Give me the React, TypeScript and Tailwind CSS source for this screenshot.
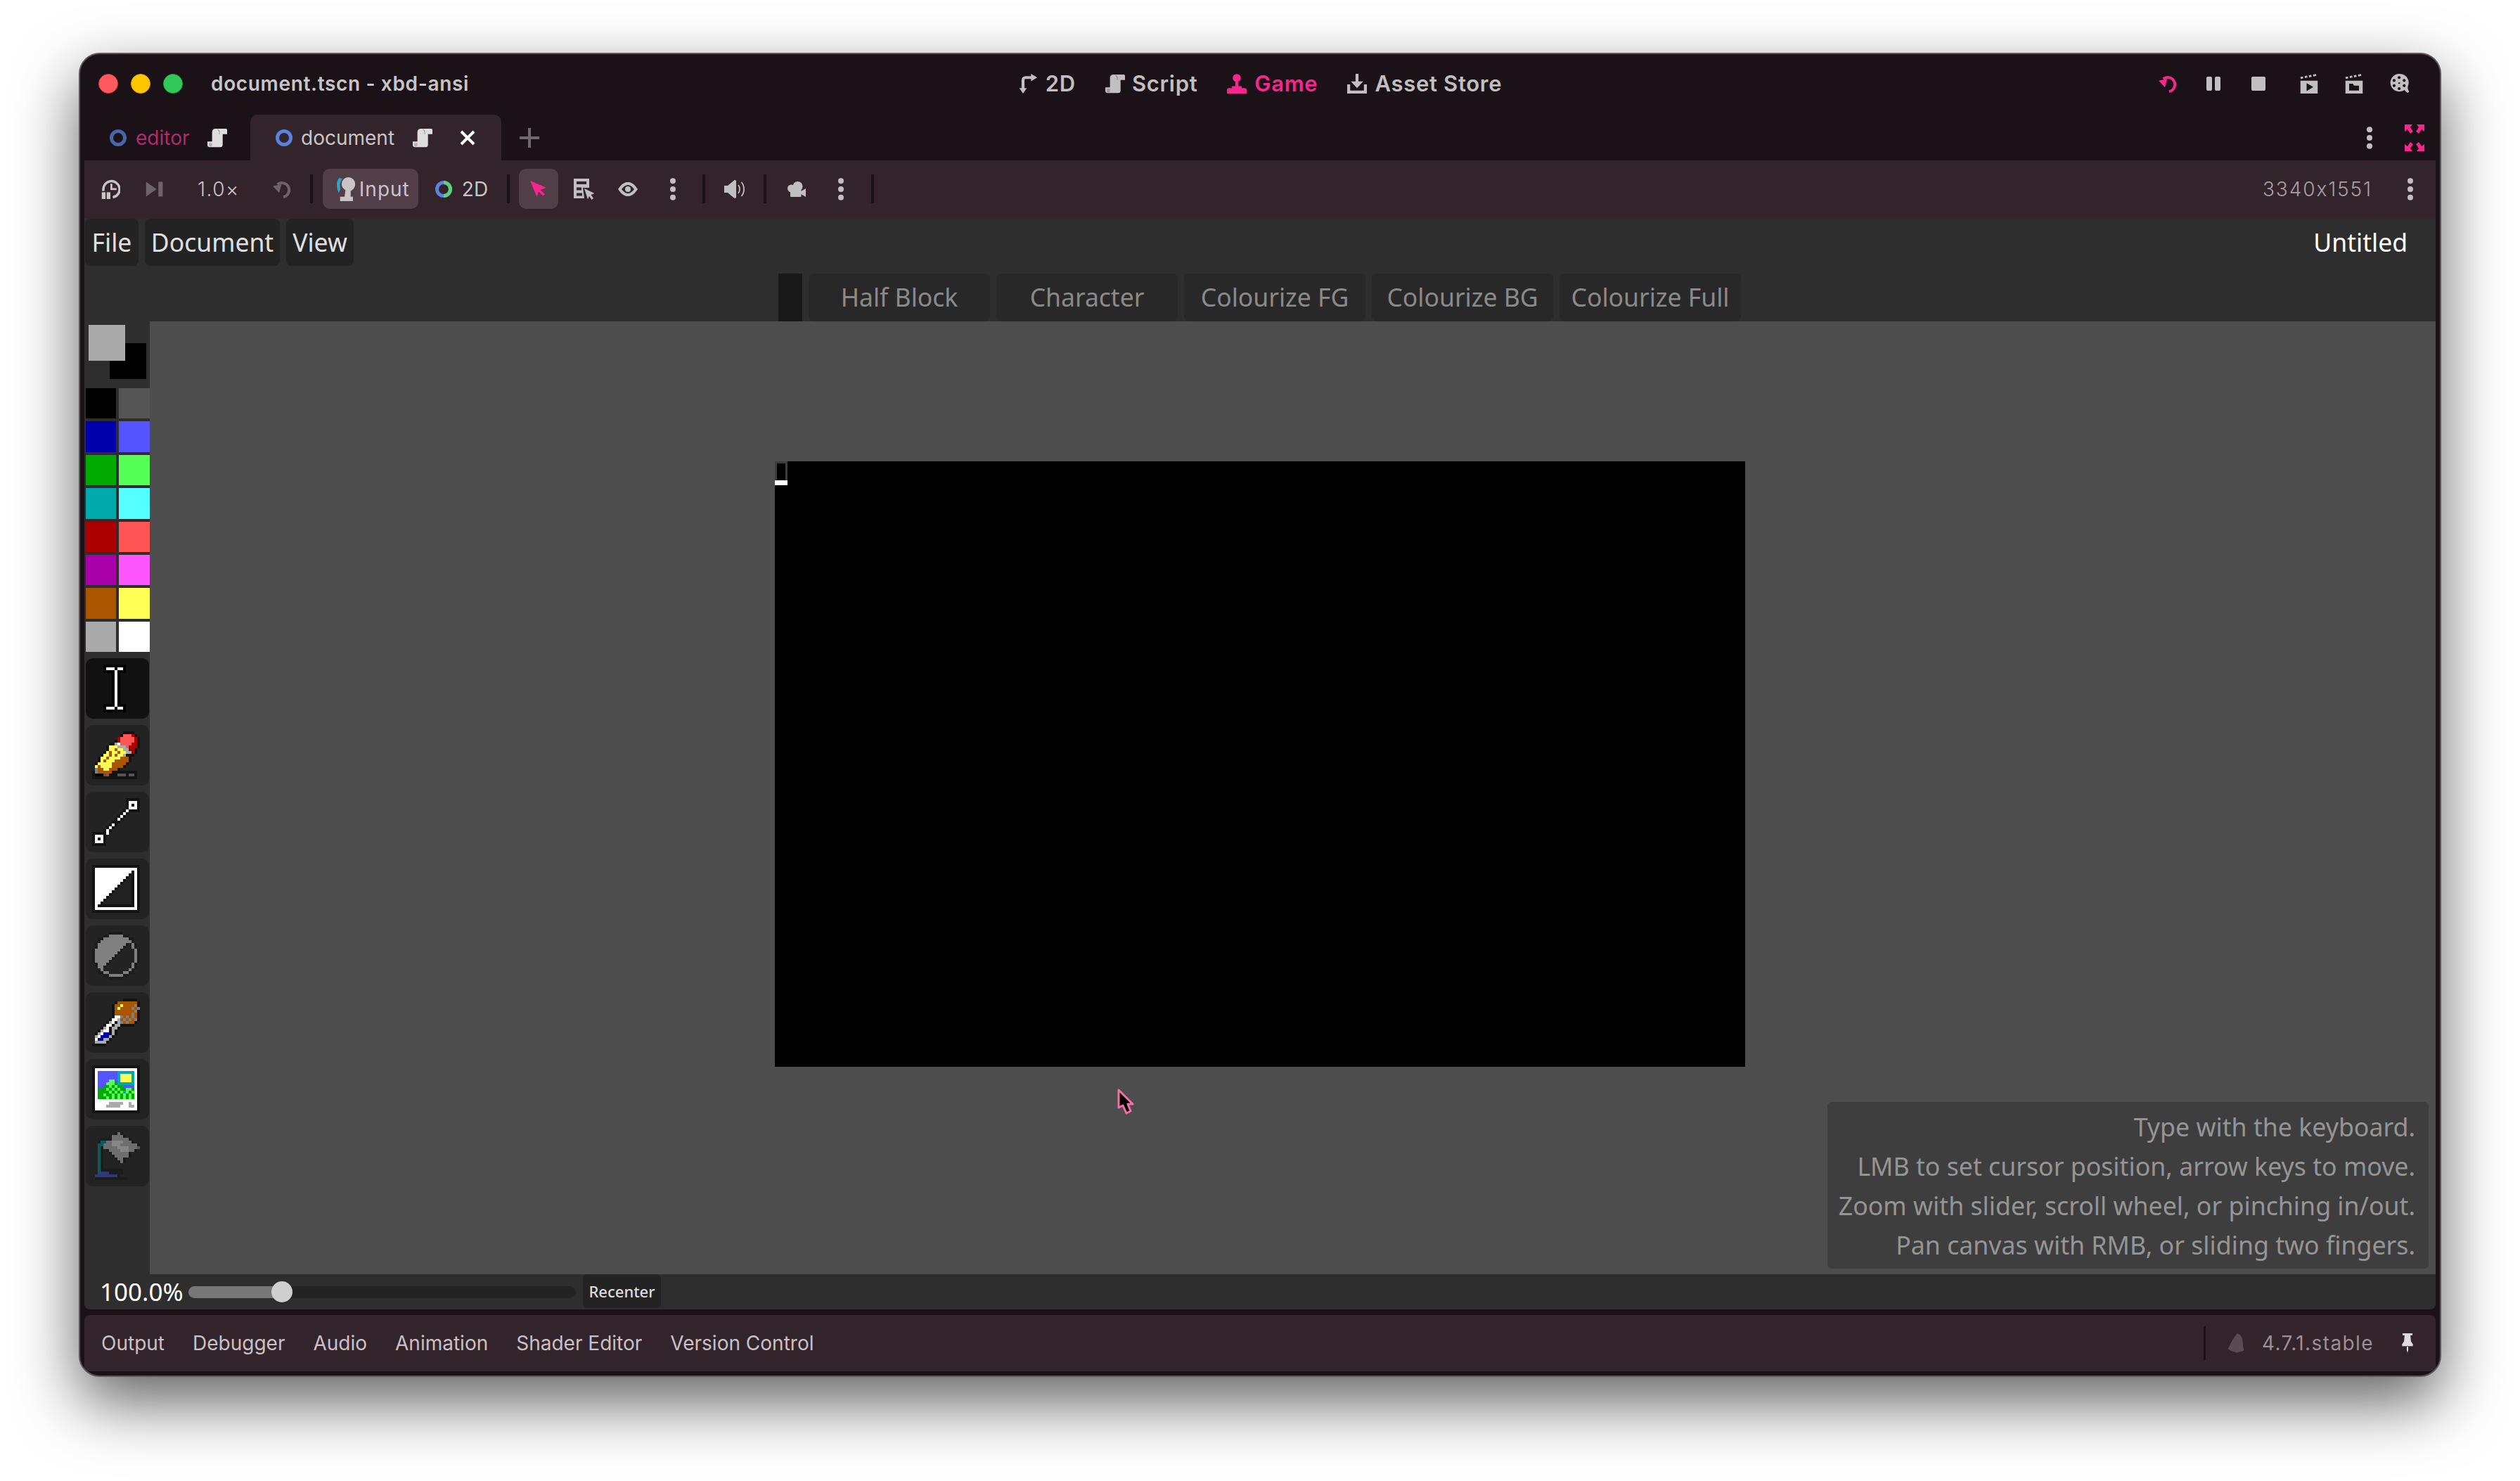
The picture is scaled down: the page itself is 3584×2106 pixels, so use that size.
import type { ReactNode } from "react";

const PIXEL_COLORS: Record<string, string> = {
  K: "#000000",
  k: "#131313",
  W: "#ffffff",
  L: "#ff5555",
  D: "#aa0000",
  Y: "#ffff55",
  O: "#aa5500",
  B: "#aa5500",
  G: "#aaaaaa",
  S: "#5555ff",
  C: "#00aaaa",
  E: "#00aa00",
  F: "#55ff55",
  A: "#aaaaaa",
  U: "#0000aa",
  g: "#808080",
  f: "#1c1c1c",
  p: "#6e6e6e",
  h: "#868686",
  d: "#232323",
  T: "#0d5a5a",
  V: "#35357a",
  M: "#555555",
};

const CURSOR_TOOL = [
  "....KKKKKKKK.....",
  "....KWWWKWWK.....",
  "....KKKKWKKK.....",
  ".......KWK.......",
  ".......KWK.......",
  ".......KWK.......",
  ".......KWK.......",
  ".......KWK.......",
  ".......KWK.......",
  ".......KWK.......",
  ".......KWK.......",
  ".......KWK.......",
  ".......KWK.......",
  ".......KWK.......",
  "....KKKKWKKK.....",
  "....KWWWKWWK.....",
  "....KKKKKKKK.....",
];

const PENCIL_TOOL = [
  "...........kkkk..",
  "..........kLLLDk.",
  ".........DLLLLLDk",
  "........kDLLLLLDk",
  "......kkGWLLLLDDk",
  ".....kYYYGGGLDDDk",
  ".....kYYBYYGGDDk.",
  "....kYBYYBYYGGDk.",
  "...kYYBYBYYGkkk..",
  "..kYYBYYYYOOOk...",
  "..kYBYYYOOOOOk...",
  ".kYYYYYOOOOOk....",
  ".YOYYYYOOOOk.....",
  ".gOOYYOOOk.......",
  "kgOOOOOkkkkkkkkk.",
  "kKKKMOkkkMMMkMMk.",
  "kkkkkkkkkkkkkkkk.",
];

const LINE_TOOL = [
  "............kkkkk",
  "............kWWWk",
  "............kWkWk",
  "............kWWWk",
  "...........kWkkkk",
  "..........kWk....",
  ".........kWk.....",
  "........kWk......",
  ".......kkk.......",
  "......kWk........",
  ".....kWk.........",
  "....kWk..........",
  "kkkkkW...........",
  "kWWWk............",
  "kWkWk............",
  "kWWWk............",
  "kkkkk............",
];

const DROPPER_TOOL = [
  "...........kkkkk.",
  "........kOOOOOOOk",
  ".......kOOYOOOOgk",
  ".......kOYOOOOgOg",
  ".......kOOOOOOOgk",
  ".......kOOOOOOgOk",
  ".......kWWgOgOgOk",
  "......kWWGOgOgOgk",
  ".....kGWkGgOgOOk.",
  "....kWWkGGkkkkk..",
  "...kGWkGGk.......",
  "..kGWWkGk........",
  ".kGWUUkGk........",
  ".GWUUUGk.........",
  ".WUUGGk..........",
  ".GGGGk...........",
  "kkkkk............",
];

const IMAGE_TOOL = [
  "kkkkkkkkkkkkkkkkk",
  "kWWWWWWWWWWWWWWWk",
  "kWSSSSSSSCCCCCCWk",
  "kWSSSSSSSCYYYYCWk",
  "kWSSSSSSSCYYYYCWk",
  "kWSSSSFFSCYYYYCWk",
  "kWSSSFFFECCCCCCWk",
  "kWSSEEFEFEESSSSWk",
  "kWEEEFEFEFEEFFEWk",
  "kWEEEEFEFEFCFEFWk",
  "kWEEFEEFEFEFEFEWk",
  "kWEEEFEFEFEFEFEWk",
  "kWWWWWWWWWWWWWWWk",
  "kWWWWWAAAAAWWAWWk",
  "kWWWWAAAAAWWWAAWk",
  "kWWWWWWWWWWWWWWWk",
  "kkkkkkkkkkkkkkkkk",
];

const BUCKET_TOOL = [
  "........fpf......",
  "......fppppf.....",
  "...ffffppppppf...",
  "..fTTpphhhhpppf..",
  "..TTppphhhppppppf",
  "..TfppppphhhhpppM",
  "..Tf.fpppphhhppf.",
  "..Tf..fppppppf...",
  "..Tf...fpppppf...",
  "..Tf....fppf.....",
  "..Tf.....fpf.....",
  "..Tf.............",
  "..Tf.............",
  "..Tffffffff......",
  "..TVVVfffff......",
  ".VVVVVVVVf.......",
  ".ffffffffffff....",
];

// rectangle tool is just a diagonal split, easier to compute than to type
function rectangleRows() {
  const rows: string[] = [];
  for (let y = 0; y < 17; y++) {
    let row = "";
    for (let x = 0; x < 17; x++) {
      if (x === 0 || y === 0 || x === 16 || y === 16) row += "k";
      else if (x === 15 || y === 15) row += "W";
      else if (x + y < 16) row += "W";
      else if (x + y === 16 || x === 14 || y === 14) row += "k";
      else row += "d";
    }
    rows.push(row);
  }
  return rows;
}

function ellipseRows() {
  const rows: string[] = [];
  for (let y = 0; y < 17; y++) {
    let row = "";
    for (let x = 0; x < 17; x++) {
      const dist = Math.hypot(x - 8, y - 8);
      if (dist > 8.5) row += ".";
      else if (dist > 7.6) row += "f";
      else if (dist > 6.6) row += "g";
      else if (x + y < 16) row += "g";
      else if (x + y === 16) row += "f";
      else row += "d";
    }
    rows.push(row);
  }
  return rows;
}

function PixelIcon({ rows }: { rows: string[] }) {
  return (
    <svg width={68} height={68} viewBox="0 0 17 17" shapeRendering="crispEdges">
      {rows.map((row, y) =>
        row.split("").map((cell, x) =>
          cell === "." ? null : (
            <rect key={`${x}-${y}`} x={x} y={y} width={1} height={1} fill={PIXEL_COLORS[cell]} />
          ),
        ),
      )}
    </svg>
  );
}

function Icon({ size = 28, className, children }: { size?: number; className?: string; children: ReactNode }) {
  return (
    <svg width={size} height={size} viewBox="0 0 16 16" fill="currentColor" className={`shrink-0 ${className ?? ""}`}>
      {children}
    </svg>
  );
}

function ScriptIcon({ className }: { className?: string }) {
  return (
    <Icon className={className}>
      <path d="M6.5 0.5H15a1 1 0 0 1 1 1V5h-3.6v8.5a2 2 0 0 1-2 2H1.8A1.8 1.8 0 0 1 0 13.7V11h3.8V3.2A2.7 2.7 0 0 1 6.5 0.5Z" />
      <path d="M1.2 12.2h2.6v1.6a1.3 1.3 0 0 1-2.6 0Z" fill="#000" fillOpacity="0.2" />
      <path d="M8.2 1.2c1.2.4 1.6 1.2 1.6 2.6v1.4" fill="none" stroke="#000" strokeOpacity="0.25" strokeWidth="0.7" />
    </Icon>
  );
}

function KebabIcon({ className }: { className?: string }) {
  return (
    <Icon className={className} size={32}>
      <circle cx="8" cy="2.1" r="2" />
      <circle cx="8" cy="8" r="2" />
      <circle cx="8" cy="13.9" r="2" />
    </Icon>
  );
}

function TwoDIcon() {
  return (
    <Icon>
      <path d="M4 14V5a2 2 0 0 1 2-2h5" fill="none" stroke="currentColor" strokeWidth="2.4" />
      <path d="M10.5 0 15.5 3 10.5 6Z" />
      <path d="M1 11.5h6L4 16Z" />
    </Icon>
  );
}

function JoystickIcon() {
  return (
    <Icon>
      <circle cx="8" cy="3.4" r="3.3" />
      <rect x="6.8" y="5" width="2.4" height="6" />
      <path d="M4 10h8v1.5h2.5a1.5 1.5 0 0 1 1.5 1.5v3H0v-3a1.5 1.5 0 0 1 1.5-1.5H4Z" />
    </Icon>
  );
}

function AssetIcon() {
  return (
    <Icon>
      <rect x="6.8" y="0" width="2.4" height="7" />
      <path d="M3 6.2h10L8 11.6Z" />
      <path d="M0 8.5h2.4v5h11.2v-5H16V16H0Z" />
    </Icon>
  );
}

function ReloadIcon({ className, size = 28 }: { className?: string; size?: number }) {
  return (
    <Icon className={className} size={size}>
      <path d="M3.8 4.2A5.8 5.8 0 1 1 8.5 14.4" fill="none" stroke="currentColor" strokeWidth="2.2" />
      <path d="M0 5.5 7 4 5.2 11Z" />
    </Icon>
  );
}

function ClapperIcon({ folder }: { folder?: boolean }) {
  return (
    <Icon>
      <path d="M1 2.5 3 2.1l.3 1.6-2 .4ZM4.4 1.8l2-.4.3 1.6-2 .4ZM7.8 1.2l2-.4.3 1.6-2 .4ZM11.2.6l2.3-.5.4 1.6-2.4.5Z" />
      <path d="M1 5.5h14V16H1Z" />
      {folder ? (
        <path d="M4 8h3l1 1.5h4v4H4Z" fill="#1a1217" />
      ) : (
        <path d="M6 7.5 11.5 10.7 6 14Z" fill="#1a1217" />
      )}
    </Icon>
  );
}

function FilmIcon() {
  return (
    <Icon>
      <path d="M8 0a7.2 7.2 0 0 1 6.6 10.2c-.3.9-.1 1.9.9 4.2l-.9 1.2c-1.5-1-2.6-2.3-2.9-2.5A7.2 7.2 0 1 1 8 0Z" />
      <g fill="#1a1217">
        <circle cx="7.5" cy="3" r="1.2" />
        <circle cx="3.4" cy="5.4" r="1.2" />
        <circle cx="11.6" cy="5.4" r="1.2" />
        <circle cx="3.4" cy="9.6" r="1.2" />
        <circle cx="11.6" cy="9.6" r="1.2" />
        <circle cx="7.5" cy="12" r="1.2" />
        <circle cx="7.5" cy="7.5" r="0.7" />
      </g>
    </Icon>
  );
}

function FullscreenIcon() {
  return (
    <svg width={28} height={38} viewBox="0 0 28 38" fill="currentColor" className="shrink-0">
      <path d="M0 0h11L8 4l4 6-4 3-4-6-4 3Z" />
      <path d="M28 0H17l3 4-4 6 4 3 4-6 4 3Z" />
      <path d="M0 38H11L8 34l4-6-4-3-4 6-4-3Z" />
      <path d="M28 38H17l3-4-4-6 4-3 4 6 4-3Z" />
    </svg>
  );
}

function TimeScaleIcon() {
  return (
    <Icon>
      <path d="M2.4 9.5A6.6 6.6 0 1 1 10 14.6" fill="none" stroke="currentColor" strokeWidth="2" />
      <path d="M8 3.5h1.6v3.6H13v1.6H8Z" />
      <rect x="1" y="10.5" width="3" height="5.5" />
      <rect x="5" y="10.5" width="3" height="5.5" />
    </Icon>
  );
}

function InputIcon() {
  return (
    <Icon size={34}>
      <path d="M5 .5C3 2.5 2.6 6 4.6 10.5L5.8 8C5 5.5 5.5 3 7 1Z" fill="#2aa5c4" />
      <path d="M11 0a4.6 4.6 0 0 1 4.6 4.6c0 2.5-1.800 4-3 4.700V13h1.500v3H5.500v-3h3l.6-4.300C7.500 7.600 6.500 6.300 6.500 4.600A4.600 4.600 0 0 1 11 0Z" />
    </Icon>
  );
}

function RingIcon({ stroke, second }: { stroke: string; second?: string }) {
  return (
    <svg width={24} height={24} viewBox="0 0 24 24" className="shrink-0" fill="none">
      <circle cx="12" cy="12" r="9.5" stroke={stroke} strokeWidth="5" />
      {second ? <path d="M12 2.5a9.5 9.5 0 0 1 0 19" stroke={second} strokeWidth="5" /> : null}
    </svg>
  );
}

function SelectArrowIcon() {
  return (
    <svg width={24} height={24} viewBox="0 0 24 24" fill="currentColor" className="shrink-0">
      <path d="M0 0 23 10 14.5 13 21 19 18.5 21.5 12 15.5 9.5 23Z" />
    </svg>
  );
}

function ListSelectIcon() {
  return (
    <svg width={30} height={30} viewBox="0 0 30 30" fill="currentColor" className="shrink-0">
      <path
        fillRule="evenodd"
        d="M0 0H22V13H13L15 28H0ZM4 4V8H18V4ZM4 12.5V16.5H11V12.5ZM4 20.5V24.5H12V20.5Z"
      />
      <path d="M15 14 29.5 21 24.5 23 28 28 25.5 30 22 25 20 29.5Z" stroke="#33232b" strokeWidth="1.5" paintOrder="stroke" />
    </svg>
  );
}

function EyeIcon() {
  return (
    <svg width={28} height={20} viewBox="0 0 28 20" fill="currentColor" className="shrink-0">
      <path
        fillRule="evenodd"
        d="M0 10C5 2.5 9 0 14 0s9 2.5 14 10C23 17.5 19 20 14 20S5 17.5 0 10ZM5 10c3 4 6 6 9 6s6-2 9-6c-3-4-6-6-9-6s-6 2-9 6Z"
      />
      <circle cx="14" cy="10" r="4" />
    </svg>
  );
}

function SpeakerIcon() {
  return (
    <svg width={29} height={28} viewBox="0 0 29 28" fill="currentColor" className="shrink-0">
      <path d="M0 9h5L14 1.5c1-.8 3-.5 3 1.500V25c0 2-2 2.300-3 1.500L5 19H0Z" />
      <path d="M20 8c1.500 2 2 4 2 6s-.5 4-2 6" fill="none" stroke="currentColor" strokeWidth="1.8" />
      <path d="M24.500 4c2.500 3 3.500 6.500 3.500 10s-1 7-3.500 10" fill="none" stroke="currentColor" strokeWidth="1.8" />
    </svg>
  );
}

function CameraIcon() {
  return (
    <svg width={26} height={22} viewBox="0 0 26 22" fill="currentColor" className="shrink-0">
      <circle cx="5.5" cy="10" r="5.5" />
      <circle cx="14.5" cy="7" r="7" />
      <rect x="4" y="11" width="15.5" height="11" rx="1" />
      <path d="M19 14 26 10V22L19 18Z" />
    </svg>
  );
}

function GodotIcon() {
  return (
    <Icon>
      <path d="M8.5 0c3 1 4.500 4 4.500 7.500 0 2.500.5 4.500 1 6-1 1-2.500 1.500-4 1.500-1 1-2.500 1-3.500 0-2 0-4-1-5.500-2.500C2.500 9.500 5 4 8.500 0Z" />
    </Icon>
  );
}

function PinIcon() {
  return (
    <svg width={20} height={28} viewBox="0 0 22 40" fill="currentColor" className="shrink-0">
      <path d="M1 0h20v4h-4l1 12 4 6v4H0v-4l4-6 1-12H1Z" />
      <path d="M9.5 27h3v7l-1.500 6-1.500-6Z" />
    </svg>
  );
}

function Divider() {
  return <div className="w-[4px] h-[41px] bg-[#1a1217] shrink-0" />;
}

const PALETTE = [
  "#000000", "#555555",
  "#0000aa", "#5555ff",
  "#00aa00", "#55ff55",
  "#00aaaa", "#55ffff",
  "#aa0000", "#ff5555",
  "#aa00aa", "#ff55ff",
  "#aa5500", "#ffff55",
  "#aaaaaa", "#ffffff",
];

const MODE_TABS = ["Half Block", "Character", "Colourize FG", "Colourize BG", "Colourize Full"];

const HINTS = [
  "Type with the keyboard.",
  "LMB to set cursor position, arrow keys to move.",
  "Zoom with slider, scroll wheel, or pinching in/out.",
  "Pan canvas with RMB, or sliding two fingers.",
];

const BOTTOM_TABS = ["Output", "Debugger", "Audio", "Animation", "Shader Editor", "Version Control"];

export default function App() {
  const tools = [CURSOR_TOOL, PENCIL_TOOL, LINE_TOOL, rectangleRows(), ellipseRows(), DROPPER_TOOL, IMAGE_TOOL, BUCKET_TOOL];

  return (
    <div className="w-[3584px] h-[2106px] bg-white pl-[112px] pt-[75px] overflow-hidden font-['Inter',sans-serif]">
      <div className="w-[3360px] h-[1883px] rounded-[30px] border-2 border-[#5c565a] bg-[#1a1217] flex flex-col shadow-[0_36px_90px_rgba(0,0,0,0.62)] overflow-hidden">
        {/* title bar */}
        <div className="h-[86px] shrink-0 grid grid-cols-[1fr_auto_1fr] items-center pb-[2px]">
          <div className="flex items-center pl-[26px]">
            <div className="w-[28px] h-[28px] rounded-full bg-[#ff5a5f] border border-[#e0383e]" />
            <div className="w-[28px] h-[28px] rounded-full bg-[#fdc700] border border-[#e0a800] ml-[18px]" />
            <div className="w-[28px] h-[28px] rounded-full bg-[#32c85a] border border-[#1fa83f] ml-[18px]" />
            <span className="ml-[40px] text-[28px] tracking-[0.66px] font-semibold text-[#c9c5c7] whitespace-nowrap">document.tscn - xbd-ansi</span>
          </div>
          <div className="flex items-center text-[31px] tracking-[0.7px] font-semibold text-[#c2bfc1]">
            <TwoDIcon />
            <span className="ml-[11px]">2D</span>
            <span className="ml-[42px]"><ScriptIcon className="text-[#c2bfc1]" /></span>
            <span className="ml-[10px]">Script</span>
            <span className="ml-[42px] text-[#f5278c]"><JoystickIcon /></span>
            <span className="ml-[11px] text-[#f5278c]">Game</span>
            <span className="ml-[42px]"><AssetIcon /></span>
            <span className="ml-[11px]">Asset Store</span>
          </div>
          <div className="flex items-center justify-end pr-[43px] text-[#c2bfc1]">
            <ReloadIcon className="text-[#f5278c]" />
            <div className="ml-[40px] w-[20px] h-[20px] flex justify-between">
              <div className="w-[8px] rounded-[2px] bg-[#c2bfc1]" />
              <div className="w-[8px] rounded-[2px] bg-[#c2bfc1]" />
            </div>
            <div className="ml-[44px] w-[20px] h-[20px] rounded-[2px] bg-[#c2bfc1]" />
            <span className="ml-[48px]"><ClapperIcon /></span>
            <span className="ml-[36px]"><ClapperIcon folder /></span>
            <span className="ml-[37px]"><FilmIcon /></span>
          </div>
        </div>

        {/* scene tabs */}
        <div className="h-[65px] shrink-0 flex items-center">
          <div className="flex items-center pl-[42px] w-[242px]">
            <RingIcon stroke="#4966a8" />
            <span className="ml-[13px] text-[28px] text-[#b02a6c]">editor</span>
            <ScriptIcon className="ml-[26px] text-[#dedede]" />
          </div>
          <div className="h-full w-[357px] bg-[#33232b] rounded-t-[10px] flex items-center pl-[36px]">
            <RingIcon stroke="#5b83dc" />
            <span className="ml-[12px] text-[28px] text-[#c9c5c7]">document</span>
            <ScriptIcon className="ml-[26px] text-[#dedede]" />
            <svg width={22} height={22} viewBox="0 0 22 22" className="ml-[39px] shrink-0" stroke="#ffffff" strokeWidth="4">
              <path d="M2 2 20 20M20 2 2 20" />
            </svg>
          </div>
          <svg width={28} height={28} viewBox="0 0 28 28" className="ml-[26px] shrink-0" fill="#6f686c">
            <rect x="12" y="0" width="4" height="28" />
            <rect x="0" y="12" width="28" height="4" />
          </svg>
          <div className="ml-auto flex items-center pr-[22px] text-[#c2bfc1] gap-[34px]">
            <KebabIcon />
            <span className="text-[#f5278c]"><FullscreenIcon /></span>
          </div>
        </div>

        {/* game toolbar */}
        <div className="h-[83px] shrink-0 mx-[6px] bg-[#33232b] flex items-center text-[#c9c5c7] text-[28px] pl-[23px] pr-[20px] pb-[2px]">
          <TimeScaleIcon />
          <svg width={28} height={28} viewBox="0 0 16 16" className="ml-[35px] shrink-0" fill="#6f636a">
            <path d="M1 2 9.5 8 1 14Z" />
            <rect x="11" y="2" width="3.5" height="12" rx="0.5" />
          </svg>
          <span className="ml-[47px] font-light tracking-[1.5px] text-[#c9c5c7]">1.0×</span>
          <ReloadIcon className="ml-[47px] text-[#6f636a]" />
          <div className="ml-[25px]"><Divider /></div>
          <div className="ml-[14px] w-[136px] h-[57px] rounded-[10px] bg-[#523e47] flex items-center pl-[13px]">
            <InputIcon />
            <span className="ml-[5px] tracking-[1px]">Input</span>
          </div>
          <div className="ml-[24px]"><RingIcon stroke="#5b83dc" second="#5cd17a" /></div>
          <span className="ml-[14px]">2D</span>
          <div className="ml-[27px]"><Divider /></div>
          <div className="ml-[13px] w-[56px] h-[57px] rounded-[10px] bg-[#523e47] flex items-center justify-center text-[#f5278c]">
            <SelectArrowIcon />
          </div>
          <div className="ml-[22px]"><span className="block text-[#c2bfc1]"><ListSelectIcon /></span></div>
          <div className="ml-[33px] text-[#c2bfc1]"><EyeIcon /></div>
          <KebabIcon className="ml-[34px] text-[#c2bfc1]" />
          <div className="ml-[26px]"><Divider /></div>
          <div className="ml-[27px] text-[#c2bfc1]"><SpeakerIcon /></div>
          <div className="ml-[27px]"><Divider /></div>
          <div className="ml-[30px] text-[#c2bfc1]"><CameraIcon /></div>
          <KebabIcon className="ml-[34px] text-[#c2bfc1]" />
          <div className="ml-[27px]"><Divider /></div>
          <span className="ml-auto text-[#a89fa4] tracking-[1.9px] font-light">3340x1551</span>
          <KebabIcon className="ml-[38px] text-[#c2bfc1]" />
        </div>

        {/* document panel */}
        <div className="h-[1551px] shrink-0 mx-[6px] bg-[#2e2e2e] flex flex-col rounded-b-[8px] font-['Noto_Sans',sans-serif] overflow-hidden">
          <div className="h-[67px] shrink-0 flex items-stretch pl-[1px] pr-[40px] text-[35.5px] text-[#e0e0e0] gap-[9px]">
            <div className="w-[76px] rounded-[8px] bg-[#232323] flex items-center justify-center">File</div>
            <div className="w-[192px] rounded-[8px] bg-[#232323] flex items-center justify-center">Document</div>
            <div className="w-[96px] rounded-[8px] bg-[#232323] flex items-center justify-center">View</div>
            <div className="ml-auto flex items-center text-white">Untitled</div>
          </div>

          <div className="h-[68px] shrink-0 mt-[11px] flex items-stretch pl-[987px] text-[35.5px] text-[#8a8a8a]">
            <div className="w-[34px] bg-[#191919]" />
            <div className="ml-[9px] flex gap-[9px]">
              {MODE_TABS.map((tab) => (
                <div key={tab} className="w-[258px] rounded-[8px] bg-[#282828] flex items-center justify-center whitespace-nowrap">
                  {tab}
                </div>
              ))}
            </div>
          </div>

          <div className="flex-1 min-h-0 flex">
            <div className="w-[93px] shrink-0 pl-[2px]">
              <div className="relative h-[95px]">
                <div className="absolute left-[34px] top-[31px] w-[52px] h-[51px] bg-black" />
                <div className="absolute left-[4px] top-[5px] w-[52px] h-[51px] bg-[#aaaaaa]" />
              </div>
              <div className="grid grid-cols-[43px_44px] gap-x-[4px] gap-y-[4px] auto-rows-[43.4px]">
                {PALETTE.map((color) => (
                  <div key={color} style={{ backgroundColor: color }} />
                ))}
              </div>
              <div className="mt-[9px] flex flex-col gap-[9px]">
                {tools.map((rows, index) => (
                  <div
                    key={index}
                    className={`w-[90px] h-[86px] rounded-[10px] flex items-center pl-[9px] ${index === 0 ? "bg-[#111111]" : "bg-[#232323]"}`}
                  >
                    <PixelIcon rows={rows} />
                  </div>
                ))}
              </div>
            </div>

            <div className="flex-1 relative bg-[#4d4d4d] pl-[889px] pt-[199px]">
              <div className="relative w-[1380px] h-[861px] bg-black">
                <div className="absolute left-0 top-0 w-[18px] h-[27px] border-[3px] border-b-0 border-[#3c3c3c]" />
                <div className="absolute left-0 top-[27px] w-[18px] h-[7px] bg-white" />
              </div>
              <svg width={24} height={38} viewBox="0 0 24 38" className="absolute left-[1376px] top-[1091px]">
                <path d="M2 2V27l6-3 5 11 6-3-4-10h7Z" fill="#000" stroke="#f26fa8" strokeWidth="3" strokeLinejoin="round" />
              </svg>
              <div className="absolute right-[10px] bottom-[8px] w-[855px] h-[237px] rounded-[6px] bg-[#3e3e3e] pt-[7px] pr-[19px] text-right text-[35.7px] leading-[56px] text-[#959595]">
                {HINTS.map((line) => (
                  <div key={line} className="whitespace-nowrap">{line}</div>
                ))}
              </div>
            </div>
          </div>

          <div className="h-[50px] shrink-0 flex items-center pl-[22px]">
            <span className="w-[126px] text-[35px] text-white">100.0%</span>
            <div className="relative w-[551px] h-[17px] rounded-full bg-[#232323]">
              <div className="w-[133px] h-full rounded-full bg-[#777777]" />
              <div className="absolute left-[118px] top-[-7px] w-[30px] h-[30px] rounded-full bg-[#cfcfcf]" />
            </div>
            <div className="ml-[10px] w-[111px] h-[48px] self-start rounded-[6px] bg-[#232323] flex items-center justify-center text-[22px] font-medium text-[#dddddd]">
              Recenter
            </div>
          </div>
        </div>

        {/* bottom panel */}
        <div className="h-[80px] shrink-0 mt-[8px] mx-[6px] rounded-[8px] bg-[#33232b] flex items-center pl-[24px] pr-[30px] text-[28px] text-[#c9c1c5]">
          <div className="flex gap-[40px]">
            {BOTTOM_TABS.map((tab) => (
              <span key={tab} className="whitespace-nowrap">{tab}</span>
            ))}
          </div>
          <div className="ml-auto w-[3px] h-[48px] bg-[#1a1217]" />
          <span className="ml-[30px] text-[#5a4a52]"><GodotIcon /></span>
          <span className="ml-[22px] tracking-[1.4px] text-[#9a9095]">4.7.1.stable</span>
          <span className="ml-[38px] text-[#e0dcde]"><PinIcon /></span>
        </div>
      </div>
    </div>
  );
}
